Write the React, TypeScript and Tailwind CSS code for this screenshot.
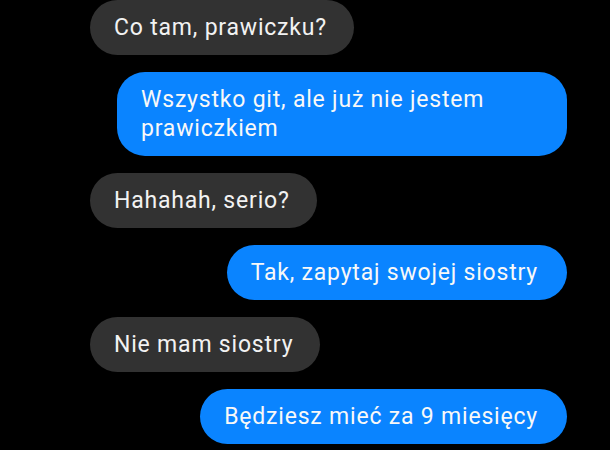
import React from "react";

type Message = {
  text: string;
  mine: boolean;
};

const messages: Message[] = [
  { text: "Co tam, prawiczku?", mine: false },
  { text: "Wszystko git, ale już nie jestem prawiczkiem", mine: true },
  { text: "Hahahah, serio?", mine: false },
  { text: "Tak, zapytaj swojej siostry", mine: true },
  { text: "Nie mam siostry", mine: false },
  { text: "Będziesz mieć za 9 miesięcy", mine: true },
];

const Bubble = ({ text, mine }: Message) => {
  return (
    <div className={mine ? "flex justify-end" : "flex justify-start"}>
      <div
        className={
          mine
            ? "max-w-[450px] rounded-[28px] bg-[#0a84ff] pl-[24px] pr-[29px] py-[13px] text-[23px] leading-[29px] tracking-[0.8px] text-[#f8f8f8]"
            : "max-w-[450px] rounded-[28px] bg-[#323232] pl-[24px] pr-[27px] py-[13px] text-[23px] leading-[29px] tracking-[0.8px] text-[#f2f2f2]"
        }
      >
        {text}
      </div>
    </div>
  );
};

const App = () => {
  return (
    <div
      className="h-[450px] w-[610px] overflow-hidden bg-black pl-[90px] pr-[43px]"
      style={{ fontFamily: "Roboto, 'Noto Sans', sans-serif" }}
    >
      {/* Chat */}
      <div className="flex flex-col gap-[17px]">
        {messages.map((m, i) => (
          <Bubble key={i} text={m.text} mine={m.mine} />
        ))}
      </div>
    </div>
  );
};

export default App;
